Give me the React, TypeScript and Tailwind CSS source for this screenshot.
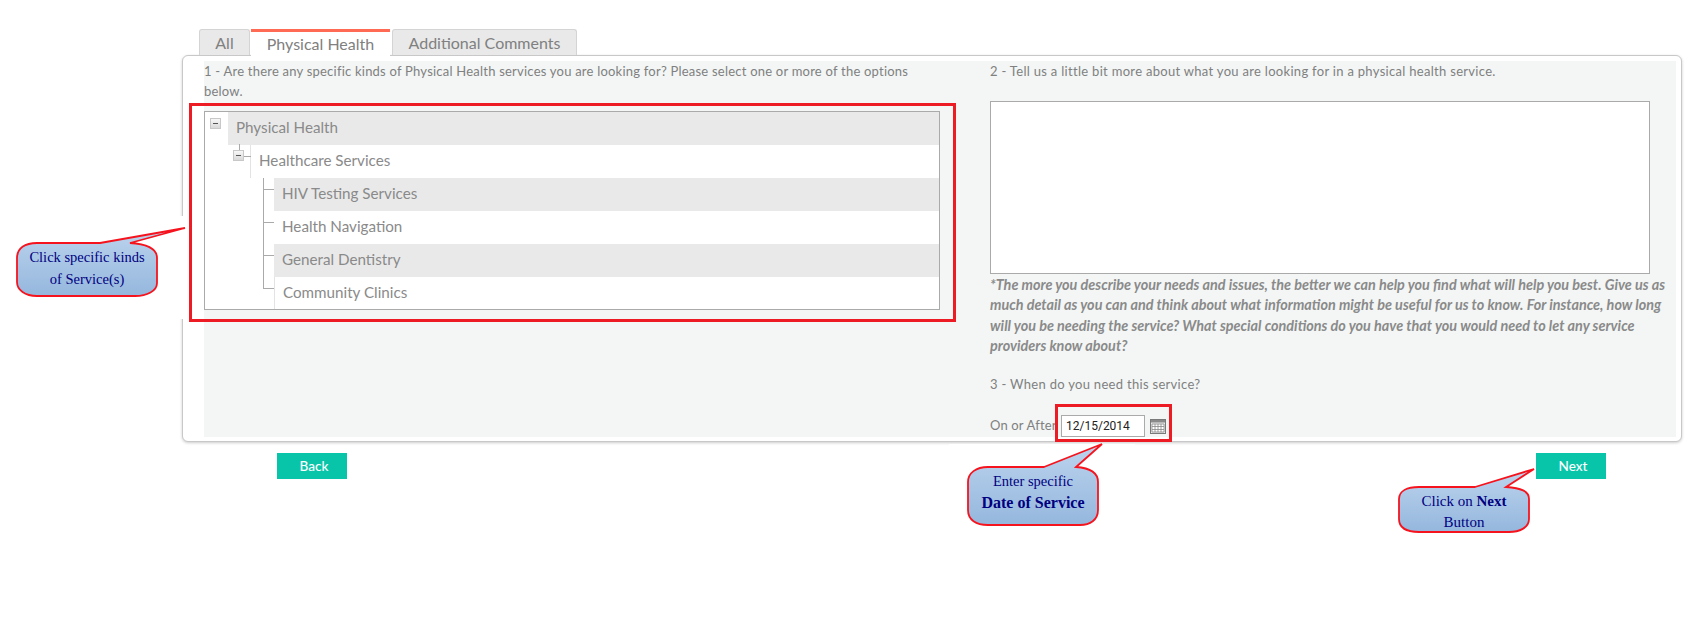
const font = "font-['Lato','Liberation_Sans',sans-serif]";

function TreeRow({
  label,
  gutter,
  shaded,
  border,
  children,
}: {
  label: string;
  gutter: string;
  shaded?: boolean;
  border?: boolean;
  children?: React.ReactNode;
}) {
  return (
    <div className="flex h-[33px]">
      <div className={`relative shrink-0 ${gutter}`}>{children}</div>
      <div
        className={`flex-1 pl-2 leading-[31px] text-[15.2px] text-[#8a8a8a] ${shaded ? "bg-[#e9e9e9]" : "bg-white"} ${border ? "border-l border-[#e3e3e3]" : ""}`}
      >
        {label}
      </div>
    </div>
  );
}

function Minus() {
  return (
    <span className="absolute top-0 left-0 flex w-[11px] h-[11px] items-center justify-center border border-[#c8c8c8] bg-gradient-to-b from-[#f8f8f8] to-[#d8d8d8]">
      <span className="block w-[5px] h-px bg-[#555]" />
    </span>
  );
}

function LeafLines({ first }: { first?: boolean }) {
  return (
    <>
      <span className={`absolute left-[58px] w-px bg-[#aaa] ${first ? "top-0 h-[12px]" : "top-[-21px] h-[33px]"}`} />
      <span className="absolute left-[58px] top-[11px] w-[11px] h-px bg-[#aaa]" />
    </>
  );
}

function CalendarIcon() {
  return (
    <svg width="16" height="15" viewBox="0 0 16 15" className="ml-[5px] shrink-0">
      <rect x="0.5" y="0.5" width="15" height="14" fill="#e8e8e8" stroke="#7a7a7a" />
      <rect x="1" y="1" width="14" height="2.5" fill="#8a8a8a" />
      <path d="M2 5h12v8H2z M2 7.5h12 M2 10.5h12 M5 5v8 M8 5v8 M11 5v8" fill="#fff" stroke="#888" strokeWidth="0.8" />
    </svg>
  );
}

function Bubble({ id, d }: { id: string; d: string }) {
  return (
    <svg className="absolute inset-0 w-full h-full overflow-visible">
      <defs>
        <linearGradient id={id} x1="0" y1="0" x2="0" y2="1">
          <stop offset="0" stopColor="#bcd4ee" />
          <stop offset="1" stopColor="#95b7dd" />
        </linearGradient>
      </defs>
      <path d={d} fill={`url(#${id})`} stroke="#f5141e" strokeWidth="1.8" strokeLinejoin="miter" />
    </svg>
  );
}

export default function App() {
  return (
    <div className={`relative w-[1696px] h-[636px] bg-white overflow-hidden text-[13px] text-[#808080] ${font}`}>
      {/* tabs */}
      <div className="flex pt-[28px] pl-[199px] h-[55px] items-end relative z-10">
        <div className="w-[51px] h-[26px] mr-px text-center leading-[25px] text-[16px] bg-[#e9e9e9] border border-b-0 border-[#d4d4d4] rounded-t-[3px]">All</div>
        <div className="w-[139px] h-[27px] -mb-px text-center leading-[24px] text-[16px] bg-white border-t-[3px] border-[#ff6a55]">Physical Health</div>
        <div className="w-[185px] h-[26px] ml-[2px] text-center leading-[25px] text-[16px] bg-[#e9e9e9] border border-b-0 border-[#d4d4d4] rounded-t-[3px]">Additional Comments</div>
      </div>

      {/* panel */}
      <div className="ml-[182px] w-[1500px] h-[387px] pt-[5px] pl-[21px] pr-[5px] pb-[4px] bg-white border border-[#c8c8c8] rounded-[6px] shadow-[0_1px_3px_rgba(0,0,0,0.2)]">
        <div className="flex h-full bg-[#f3f6f5]">
          {/* left column */}
          <div className="w-[786px]">
            <p className="w-[735px] leading-[20px] tracking-[0.22px]">
              1 - Are there any specific kinds of Physical Health services you are looking for? Please select one or more of the options below.
            </p>
            <div className="mt-[10px] w-[736px] h-[199px] border border-[#aaa] bg-white overflow-hidden">
              <TreeRow label="Physical Health" gutter="w-[23px]" shaded>
                <span className="absolute left-[5px] top-[6px] w-[11px] h-[11px]"><Minus /></span>
              </TreeRow>
              <TreeRow label="Healthcare Services" gutter="w-[45px]" border>
                <span className="absolute left-[34px] top-[-1px] w-px h-[6px] bg-[#aaa]" />
                <span className="absolute left-[39px] top-[11px] w-[7px] h-px bg-[#aaa]" />
                <span className="absolute left-[28px] top-[5px] w-[11px] h-[11px]"><Minus /></span>
              </TreeRow>
              <TreeRow label="HIV Testing Services" gutter="w-[69px]" shaded>
                <LeafLines first />
              </TreeRow>
              <TreeRow label="Health Navigation" gutter="w-[69px]">
                <LeafLines />
              </TreeRow>
              <TreeRow label="General Dentistry" gutter="w-[69px]" shaded>
                <LeafLines />
              </TreeRow>
              <TreeRow label="Community Clinics" gutter="w-[69px]" border>
                <LeafLines />
              </TreeRow>
            </div>
          </div>

          {/* right column */}
          <div className="flex-1 min-w-0">
            <p className="leading-[20px] tracking-[0.3px]">
              2 - Tell us a little bit more about what you are looking for in a physical health service.
            </p>
            <div className="mt-[20px] w-[660px] h-[173px] border border-[#aaa] bg-white" />
            <p className="mt-[1px] w-[690px] leading-[20.3px] italic font-bold text-[14.4px] text-[#8a8a8a]">
              *The more you describe your needs and issues, the better we can help you find what will help you best. Give us as much detail as you can and think about what information might be useful for us to know. For instance, how long will you be needing the service? What special conditions do you have that you would need to let any service providers know about?
            </p>
            <p className="mt-[18px] leading-[20px] tracking-[0.3px]">3 - When do you need this service?</p>
            <div className="flex items-center mt-[21px] h-[22px]">
              <span className="w-[71px] shrink-0 tracking-[0.16px]">On or After</span>
              <div className="w-[84px] h-[22px] px-[4px] border border-[#aaa] bg-white text-[12px] leading-[21px] text-[#222] font-['Roboto',sans-serif]">12/15/2014</div>
              <CalendarIcon />
            </div>
          </div>
        </div>
      </div>

      {/* buttons */}
      <div className="flex justify-between mt-[11px] ml-[277px] w-[1329px]">
        <button className="w-[70px] h-[26px] pl-1 bg-[#08c5aa] text-white text-[13.5px] font-medium">Back</button>
        <button className="w-[70px] h-[26px] pl-1 bg-[#08c5aa] text-white text-[13.5px] font-medium">Next</button>
      </div>

      {/* annotation overlays */}
      <div className="absolute left-[177px] top-[216px] w-[10px] h-[103px] bg-white" />
      <div className="absolute left-[949px] top-[444px] w-[186px] h-[6px] bg-white" />
      <div className="absolute left-[189px] top-[103px] w-[767px] h-[219px] border-[3px] border-[#ed1c24]" />
      <div className="absolute left-[1055px] top-[404px] w-[117px] h-[38px] border-[3px] border-[#ed1c24]" />

      <div className="absolute left-[17px] top-[228px] w-[168px] h-[69px] font-['Liberation_Serif',serif] text-[14.5px] leading-[22px] text-[#000080]">
        <Bubble id="b1" d="M83 15 L168 0 L113 15 C130 16 140 20 140 30 L140 55 C140 63 130 68 118 68 L20 68 C8 68 0 62 0 54 L0 30 C0 20 8 15 20 15 Z" />
        <div className="absolute left-0 top-[18px] w-[140px] text-center">
          Click specific kinds<br />of Service(s)
        </div>
      </div>

      <div className="absolute left-[968px] top-[444px] w-[134px] h-[82px] font-['Liberation_Serif',serif] text-[14.5px] leading-[21px] text-[#000080]">
        <Bubble id="b2" d="M76 23 L134 0 L108 23 C122 24 130 29 130 38 L130 66 C130 76 122 81 112 81 L20 81 C8 81 0 76 0 66 L0 38 C0 29 8 23 20 23 Z" />
        <div className="absolute left-0 top-[27px] w-[130px] text-center">
          Enter specific<br /><b className="text-[16px]">Date of Service</b>
        </div>
      </div>

      <div className="absolute left-[1399px] top-[469px] w-[135px] h-[64px] font-['Liberation_Serif',serif] text-[15px] leading-[21px] text-[#000080]">
        <Bubble id="b3" d="M76 18 L135 0 L107 18 C122 19 130 22 130 30 L130 50 C130 59 120 63 110 63 L20 63 C8 63 0 59 0 50 L0 30 C0 22 8 18 20 18 Z" />
        <div className="absolute left-0 top-[22px] w-[130px] text-center">
          Click on <b>Next</b><br />Button
        </div>
      </div>
    </div>
  );
}
